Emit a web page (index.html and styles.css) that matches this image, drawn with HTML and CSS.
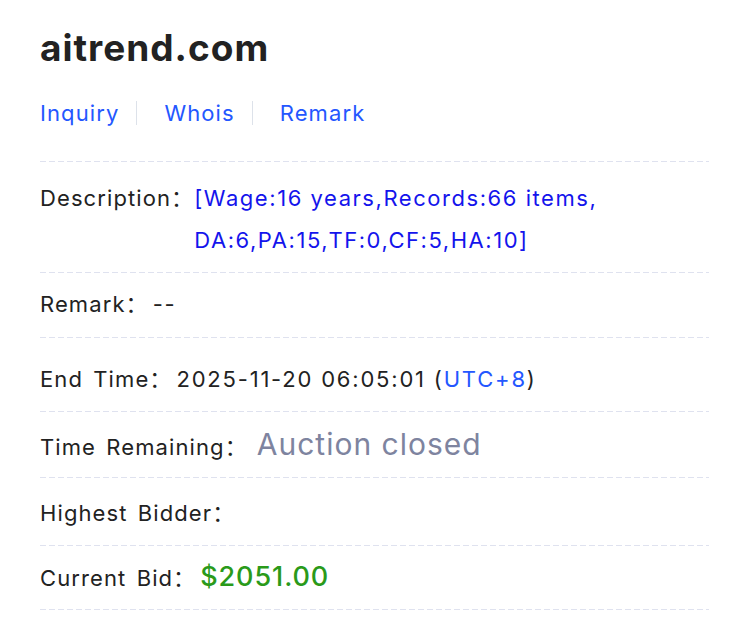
FILE: index.html
```html
<!DOCTYPE html>
<html>
<head>
<meta charset="utf-8">
<link rel="stylesheet" href="styles.css">
</head>
<body>
<div class="page">
  <h1 class="title">aitrend.com</h1>
  <div class="links">
    <a class="link">Inquiry</a>
    <span class="sep"></span>
    <a class="link">Whois</a>
    <span class="sep"></span>
    <a class="link">Remark</a>
  </div>
  <div class="rule"></div>
  <div class="row row-desc">
    <span class="label">Description：</span>
    <span class="desc">[Wage:16 years,Records:66 items,<br>DA:6,PA:15,TF:0,CF:5,HA:10]</span>
  </div>
  <div class="rule"></div>
  <div class="row row-remark">
    <span class="label">Remark：</span>
    <span class="value">--</span>
  </div>
  <div class="rule"></div>
  <div class="row row-end">
    <span class="label">End Time：</span>
    <span class="value">2025-11-20 06:05:01 (<span class="utc">UTC+8</span>)</span>
  </div>
  <div class="rule"></div>
  <div class="row row-time">
    <span class="label">Time Remaining：</span>
    <span class="closed">Auction closed</span>
  </div>
  <div class="rule"></div>
  <div class="row row-bidder">
    <span class="label">Highest Bidder：</span>
  </div>
  <div class="rule"></div>
  <div class="row row-bid">
    <span class="label">Current Bid：</span>
    <span class="bid">$2051.00</span>
  </div>
  <div class="rule"></div>
</div>
</body>
</html>
```

FILE: styles.css
```css
html, body {
  margin: 0;
  padding: 0;
  background: #ffffff;
}
body {
  font-family: Inter, "Noto Sans CJK SC", sans-serif;
  color: #222222;
}
.page {
  width: 669px;
  margin-left: 40px;
  padding-top: 25px;
}
.title {
  margin: 0;
  font-size: 37px;
  line-height: 46px;
  font-weight: 700;
  color: #222222;
  letter-spacing: 1px;
}
.links {
  display: flex;
  align-items: center;
  margin-top: 25px;
  height: 34px;
  margin-bottom: 31px;
}
.link {
  font-size: 22px;
  color: #2457ff;
  letter-spacing: 1.1px;
}
.sep {
  width: 1px;
  height: 24px;
  background: #dde2ea;
  margin: 0 27px 0 17px;
}
.rule {
  height: 1px;
  background: repeating-linear-gradient(to right, #dfe2ef 0 6px, transparent 6px 9px);
}
.row {
  display: flex;
  align-items: baseline;
  font-size: 22px;
}
.label {
  color: #222222;
  white-space: nowrap;
  letter-spacing: 1.1px;
  word-spacing: 3px;
}
.value {
  margin-left: 4px;
  color: #222222;
  letter-spacing: 1.8px;
}
.row-desc {
  padding: 15px 0 11px;
  line-height: 42px;
}
.desc {
  margin-left: 0;
  color: #1414ec;
  letter-spacing: 1.55px;
}
.row-remark {
  padding: 15px 0 16px;
  line-height: 33px;
}
.row-end {
  padding: 25px 0 16px;
  line-height: 32px;
}
.utc {
  color: #2457ff;
}
.row-time {
  padding: 13px 0 10px;
  line-height: 39px;
}
.closed {
  margin-left: 9px;
  font-size: 30px;
  letter-spacing: 1px;
  color: #7e849f;
}
.row-bidder {
  padding: 20px 0 16px;
  line-height: 31px;
}
.row-bid {
  padding: 13px 0 13px;
  line-height: 35px;
}
.bid {
  margin-left: 4px;
  font-size: 27px;
  font-weight: 500;
  letter-spacing: 0.9px;
  color: #2a9a1a;
}
```
